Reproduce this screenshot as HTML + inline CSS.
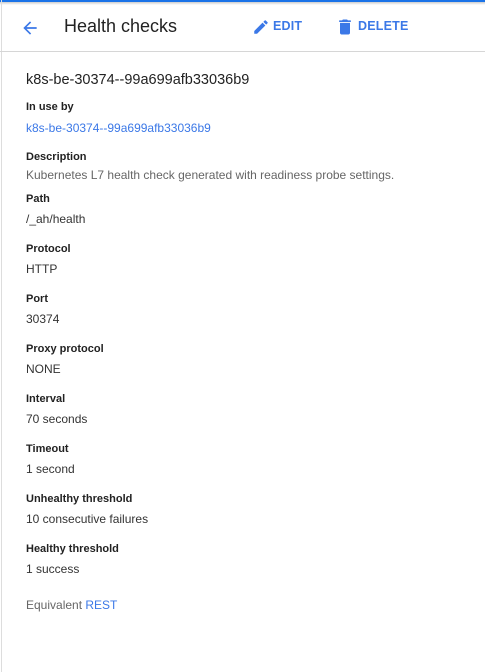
<!DOCTYPE html>
<html><head><style>
body{margin:0;width:485px;height:672px;background:#fff;font-family:"Liberation Sans",sans-serif;position:relative;overflow:hidden}
.top{position:absolute;left:0;top:0;width:485px;height:2px;background:#1a73e8}
.sh{position:absolute;left:0;top:2px;width:485px;height:3px;background:linear-gradient(#ccc,#fff)}
.lb{position:absolute;left:1px;top:0;width:1px;height:672px;background:#ddd}
.hl{position:absolute;left:0;top:51px;width:485px;height:1px;background:#d6d6d6}
.a{position:absolute;white-space:nowrap}
.l{font-size:11px;font-weight:bold;color:#222;left:26px}
.v{font-size:12px;color:#333;left:26px}
.btn{font-size:12.5px;font-weight:bold;color:#3b78e7;letter-spacing:.2px}
</style></head><body>
<div class="top"></div><div class="sh"></div><div class="lb"></div><div class="hl"></div>
<svg class="a" style="left:20px;top:18px" width="20" height="20" viewBox="0 0 24 24"><path d="M20 11H7.83l5.59-5.59L12 4l-8 8 8 8 1.41-1.41L7.83 13H20v-2z" fill="#3b78e7"/></svg>
<div class="a" style="left:64px;top:16px;font-size:18px;color:#222">Health checks</div>
<svg class="a" style="left:252px;top:18px" width="18" height="18" viewBox="0 0 24 24"><path d="M3 17.25V21h3.75L17.81 9.94l-3.75-3.75L3 17.25zM20.71 7.04a1 1 0 000-1.41l-2.34-2.34a1 1 0 00-1.41 0l-1.83 1.83 3.750 3.75 1.83-1.83z" fill="#3b78e7"/></svg>
<div class="a btn" style="left:273px;top:19px">EDIT</div>
<svg class="a" style="left:335px;top:17px" width="20" height="20" viewBox="0 0 24 24"><path d="M6 19c0 1.1.9 2 2 2h8c1.1 0 2-.9 2-2V7H6v12zM19 4h-3.5l-1-1h-5l-1 1H5v2h14V4z" fill="#3b78e7"/></svg>
<div class="a btn" style="left:358px;top:19px">DELETE</div>
<div class="a" style="left:26px;top:72px;font-size:14.5px;color:#222">k8s-be-30374--99a699afb33036b9</div>
<div class="a l" style="top:101px">In use by</div>
<div class="a v" style="top:121px;color:#3b78e7">k8s-be-30374--99a699afb33036b9</div>
<div class="a l" style="top:151px">Description</div>
<div class="a v" style="top:168px;color:#666">Kubernetes L7 health check generated with readiness probe settings.</div>
<div class="a l" style="top:193px">Path</div>
<div class="a v" style="top:212px">/_ah/health</div>
<div class="a l" style="top:243px">Protocol</div>
<div class="a v" style="top:262px">HTTP</div>
<div class="a l" style="top:293px">Port</div>
<div class="a v" style="top:312px">30374</div>
<div class="a l" style="top:343px">Proxy protocol</div>
<div class="a v" style="top:362px">NONE</div>
<div class="a l" style="top:393px">Interval</div>
<div class="a v" style="top:412px">70 seconds</div>
<div class="a l" style="top:443px">Timeout</div>
<div class="a v" style="top:462px">1 second</div>
<div class="a l" style="top:493px">Unhealthy threshold</div>
<div class="a v" style="top:512px">10 consecutive failures</div>
<div class="a l" style="top:543px">Healthy threshold</div>
<div class="a v" style="top:562px">1 success</div>
<div class="a v" style="top:598px;color:#666">Equivalent <span style="color:#3b78e7">REST</span></div>
</body></html>
